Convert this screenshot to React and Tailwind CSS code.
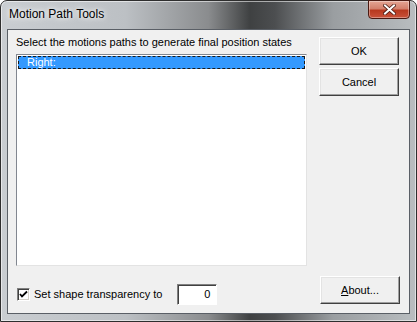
import React, { useState } from 'react';

const font = { fontFamily: '"Liberation Sans", Arial, sans-serif' };

const Button = ({ children, className = '' }) => (
  <button
    className={`w-[80px] h-[28px] bg-[#f0f0f0] text-[11px] text-black border border-t-white border-l-white border-r-[#404040] border-b-[#404040] shadow-[inset_-1px_-1px_0_#a0a0a0,inset_1px_1px_0_#e3e3e3] ${className}`}
    style={font}
  >
    {children}
  </button>
);

const App = () => {
  const [checked, setChecked] = useState(true);

  return (
    <div className="w-[417px] h-[322px] overflow-hidden" style={font}>
      <div className="w-full h-full flex flex-col rounded-t-[7px] border border-[#2e2e2e] bg-[linear-gradient(90deg,#c9cdd1_0%,#bcc0c4_30%,#8a8c8e_50%,#3f4142_60%,#4c4e50_66%,#9a9ea1_80%,#b9bdc0_100%)] shadow-[inset_0_0_0_1px_rgba(255,255,255,0.55)] px-[6px]">
        {/* title bar */}
        <div className="relative h-[28px] flex items-start pt-[5px] pl-[1px]">
          <span
            className="text-[12px] text-black leading-[16px] px-[1px] [text-shadow:0_0_8px_#fff,0_0_4px_#fff]"
            style={font}
          >
            Motion Path Tools
          </span>
          <div className="absolute right-[0px] top-[-1px] w-[42px] h-[19px] rounded-b-[4px] border border-[#4a1a12] bg-[linear-gradient(180deg,#e5a594_0%,#d3806c_45%,#b8391f_55%,#c9523a_100%)] flex items-center justify-center shadow-[inset_0_0_0_1px_rgba(255,255,255,0.35)]">
            <svg width="13" height="11" viewBox="0 0 13 11">
              <path d="M2 1.5 L11 9.5 M11 1.5 L2 9.5" stroke="#4a1a12" strokeWidth="3.6" strokeLinecap="square" />
              <path d="M2 1.5 L11 9.5 M11 1.5 L2 9.5" stroke="#ffffff" strokeWidth="2" strokeLinecap="square" />
            </svg>
          </div>
        </div>

        {/* client area */}
        <div className="flex-1 mb-[7px] border border-[#5a5f66] bg-[#f0f0f0] flex flex-col">
          <div className="flex">
            <div className="pl-[8px] pt-[6px] flex flex-col">
              <div className="text-[11px] leading-[13px] text-black mb-[5px]">
                Select the motions paths to generate final position states
              </div>
              <div className="w-[291px] h-[212px] bg-white border border-t-[#828790] border-l-[#828790] border-r-[#e3e3e3] border-b-[#e3e3e3] p-[1px]">
                <div className="h-[13px] bg-[#3399ff] border border-dashed border-[#1a1a1a] text-white text-[11px] leading-[11px] pl-[8px] shadow-[inset_0_0_0_1px_#3399ff]">
                  Right:
                </div>
              </div>
            </div>
            <div className="ml-[12px] pt-[7px] flex flex-col gap-[3px]">
              <Button className="h-[27px]">OK</Button>
              <Button>Cancel</Button>
            </div>
          </div>

          <div className="flex-1 flex items-end justify-between pl-[9px] pr-[7px] pb-[8px]">
            <div className="flex items-center">
              <button
                onClick={() => setChecked(!checked)}
                className="w-[13px] h-[13px] bg-white border border-t-[#808080] border-l-[#808080] border-r-[#ffffff] border-b-[#ffffff] shadow-[inset_1px_1px_0_#404040,inset_-1px_-1px_0_#d4d0c8] flex items-center justify-center"
              >
                {checked && (
                  <svg width="9" height="9" viewBox="0 0 9 9">
                    <path d="M1 4 L3 6.5 L8 1.5" stroke="#000" strokeWidth="1.8" fill="none" />
                  </svg>
                )}
              </button>
              <span className="ml-[4px] text-[11px] text-black leading-[13px]">Set shape transparency to</span>
              <div className="ml-[15px] w-[40px] h-[21px] bg-white border border-t-[#808080] border-l-[#808080] border-r-[#ffffff] border-b-[#ffffff] shadow-[inset_1px_1px_0_#404040] text-[11px] text-right pr-[6px] leading-[19px] text-black">
                0
              </div>
            </div>
            <Button className="mb-[1px] mr-[2px]">
              <span className="underline">A</span>bout...
            </Button>
          </div>
        </div>
      </div>
    </div>
  );
};

export default App;
